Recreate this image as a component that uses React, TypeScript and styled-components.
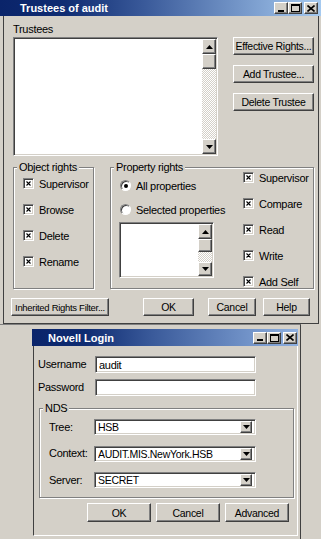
import React from "react";
import styled, { createGlobalStyle, css } from "styled-components";

const GlobalStyle = createGlobalStyle`
  html, body { margin: 0; padding: 0; }
  body {
    width: 321px;
    height: 539px;
    overflow: hidden;
    background: #d4d0c8;
    font-family: "Liberation Sans", Arial, sans-serif;
    font-size: 11px;
    letter-spacing: -0.3px;
    color: #000;
  }
`;

const raised = css`
  background: #d4d0c8;
  border: 1px solid;
  border-color: #fff #404040 #404040 #fff;
  box-shadow: inset -1px -1px 0 #808080;
  box-sizing: border-box;
`;

const sunken = css`
  background: #fff;
  border: 1px solid;
  border-color: #808080 #fff #fff #808080;
  box-shadow: inset 1px 1px 0 #404040, inset -1px -1px 0 #d4d0c8;
  box-sizing: border-box;
`;

const Desktop = styled.div`
  position: relative;
  width: 321px;
  height: 539px;
  overflow: hidden;
`;

const Window = styled.div<{ $w: number; $h: number }>`
  display: flex;
  flex-direction: column;
  width: ${(p) => p.$w}px;
  height: ${(p) => p.$h}px;
  background: #d4d0c8;
  box-sizing: border-box;
`;

const FloatingWindow = styled(Window)<{ $x: number; $y: number }>`
  position: absolute;
  left: ${(p) => p.$x}px;
  top: ${(p) => p.$y}px;
`;

const BackWindow = styled.div`
  position: absolute;
  left: 0;
  top: 324px;
  width: 301px;
  height: 215px;
  box-sizing: border-box;
  border-top: 1px solid #808080;
  border-right: 1px solid #404040;
`;

const TitleBar = styled.div<{ $h: number; $pl: number; $pr: number; $end: string }>`
  display: flex;
  align-items: center;
  flex: none;
  height: ${(p) => p.$h}px;
  padding: 0 ${(p) => p.$pr}px 0 ${(p) => p.$pl}px;
  background: linear-gradient(90deg, #0a246a 0%, #0f2c72 20%, #3a5a9a 45%, ${(p) => p.$end} 100%);
`;

const TitleText = styled.span`
  flex: 1;
  color: #fff;
  font-weight: bold;
  font-size: 11px;
  letter-spacing: 0;
  white-space: nowrap;
`;

const CaptionGroup = styled.div`
  display: flex;
  align-items: center;
`;

const CaptionButton = styled.div<{ $gap?: number }>`
  ${raised};
  width: 14px;
  height: 12px;
  margin-left: ${(p) => p.$gap ?? 0}px;
  display: flex;
  align-items: center;
  justify-content: center;
`;

const Caption = () => (
  <CaptionGroup>
    <CaptionButton>
      <svg width="8" height="7" viewBox="0 0 8 7">
        <rect x="1" y="5" width="6" height="2" fill="#000" />
      </svg>
    </CaptionButton>
    <CaptionButton>
      <svg width="9" height="8" viewBox="0 0 9 8">
        <rect x="0.5" y="0.5" width="8" height="7" fill="none" stroke="#000" />
        <rect x="0" y="0" width="9" height="2" fill="#000" />
      </svg>
    </CaptionButton>
    <CaptionButton $gap={2}>
      <svg width="8" height="7" viewBox="0 0 8 7">
        <path d="M0.5 0.5 L7.5 6.5 M7.5 0.5 L0.5 6.5" stroke="#000" strokeWidth="1.6" />
      </svg>
    </CaptionButton>
  </CaptionGroup>
);

/* ---------- top dialog ---------- */

const TrusteeBody = styled.div`
  flex: 1;
  margin: 0 2px 0 3px;
  border: 1px solid #404040;
  border-top: none;
  padding: 7px 0 0 9px;
  display: flex;
  flex-direction: column;
`;

const TopRow = styled.div`
  display: flex;
`;

const ListColumn = styled.div`
  display: flex;
  flex-direction: column;
`;

const Label = styled.div<{ $w?: number; $mb?: number }>`
  height: 13px;
  line-height: 13px;
  white-space: nowrap;
  margin-bottom: ${(p) => p.$mb ?? 0}px;
  ${(p) => p.$w !== undefined && `width: ${p.$w}px; flex: none;`}
`;

const ListBox = styled.div<{ $w: number; $h: number; $ml?: number }>`
  ${sunken};
  width: ${(p) => p.$w}px;
  height: ${(p) => p.$h}px;
  margin-left: ${(p) => p.$ml ?? 0}px;
  padding: 1px;
  display: flex;
  justify-content: flex-end;
`;

const ScrollBar = styled.div`
  width: 14px;
  display: flex;
  flex-direction: column;
`;

const ScrollButton = styled.div<{ $h: number }>`
  ${raised};
  height: ${(p) => p.$h}px;
  flex: none;
  display: flex;
  align-items: center;
  justify-content: center;
`;

const Track = styled.div`
  flex: 1;
  background: repeating-conic-gradient(#fff 0 25%, #d4d0c8 0 50%) 0 0 / 2px 2px;
`;

const Arrow = ({ down }: { down?: boolean }) => (
  <svg width="7" height="4" viewBox="0 0 7 4">
    <polygon points={down ? "0,0 7,0 3.5,4" : "0,4 7,4 3.5,0"} fill="#000" />
  </svg>
);

const SideButtons = styled.div`
  display: flex;
  flex-direction: column;
  gap: 10px;
  margin: 14px 0 0 15px;
`;

const PushButton = styled.div<{ $w: number; $h: number; $ml?: number; $fs?: number }>`
  ${raised};
  width: ${(p) => p.$w}px;
  height: ${(p) => p.$h}px;
  margin-left: ${(p) => p.$ml ?? 0}px;
  flex: none;
  display: flex;
  align-items: center;
  justify-content: center;
  font-size: ${(p) => p.$fs ?? 10.5}px;
  white-space: nowrap;
  overflow: hidden;
`;

const GroupRow = styled.div`
  display: flex;
  margin-top: 11px;
`;

const Group = styled.div<{ $w: number; $h: number; $ml?: number }>`
  position: relative;
  width: ${(p) => p.$w}px;
  height: ${(p) => p.$h}px;
  margin-left: ${(p) => p.$ml ?? 0}px;
  flex: none;
  box-sizing: border-box;
  border: 1px solid #808080;
  box-shadow: inset 1px 1px 0 #fff, 1px 1px 0 #fff;
`;

const Legend = styled.span`
  position: absolute;
  top: -7px;
  left: 3px;
  padding: 0 2px;
  line-height: 13px;
  background: #d4d0c8;
  white-space: nowrap;
`;

const CheckList = styled.div<{ $pt: number; $pl: number }>`
  display: flex;
  flex-direction: column;
  gap: 13px;
  padding: ${(p) => p.$pt}px 0 0 ${(p) => p.$pl}px;
`;

const PropertyInner = styled.div`
  display: flex;
  height: 100%;
`;

const PropertyLeft = styled.div`
  width: 132px;
  flex: none;
  padding: 11px 0 0 9px;
  box-sizing: border-box;
  display: flex;
  flex-direction: column;
`;

const Row = styled.div<{ $mb?: number }>`
  display: flex;
  align-items: center;
  height: 13px;
  gap: 5px;
  margin-bottom: ${(p) => p.$mb ?? 0}px;
  white-space: nowrap;
`;

const CheckBox = styled.div`
  ${sunken};
  width: 11px;
  height: 11px;
  flex: none;
  display: flex;
  align-items: center;
  justify-content: center;
`;

const RadioCircle = styled.div`
  width: 11px;
  height: 11px;
  flex: none;
  box-sizing: border-box;
  border-radius: 50%;
  background: #fff;
  border: 1px solid;
  border-color: #808080 #fff #fff #808080;
  box-shadow: inset 1px 1px 0 #404040;
  display: flex;
  align-items: center;
  justify-content: center;
`;

const RadioDot = styled.div`
  width: 4px;
  height: 4px;
  border-radius: 50%;
  background: #000;
`;

const Check = ({ label }: { label: string }) => (
  <Row>
    <CheckBox>
      <svg width="5" height="5" viewBox="0 0 5 5">
        <path d="M0.5 0.5 L4.5 4.5 M4.5 0.5 L0.5 4.5" stroke="#000" strokeWidth="1.1" />
      </svg>
    </CheckBox>
    <span>{label}</span>
  </Row>
);

const Radio = ({ label, on, mb }: { label: string; on?: boolean; mb: number }) => (
  <Row $mb={mb}>
    <RadioCircle>{on && <RadioDot />}</RadioCircle>
    <span>{label}</span>
  </Row>
);

const BottomRow = styled.div`
  display: flex;
  margin-top: 9px;
`;

/* ---------- Novell login ---------- */

const LoginBody = styled.div`
  flex: 1;
  margin-left: 1px;
  border-left: 1px solid #404040;
  border-right: 1px solid #fff;
  border-bottom: 1px solid #fff;
  padding: 10px 8px 0 4px;
  display: flex;
  flex-direction: column;
`;

const Fields = styled.div<{ $gap: number }>`
  display: flex;
  flex-direction: column;
  gap: ${(p) => p.$gap}px;
`;

const FieldRow = styled.div`
  display: flex;
  align-items: center;
`;

const TextInput = styled.div<{ $w: number; $h: number }>`
  ${sunken};
  width: ${(p) => p.$w}px;
  height: ${(p) => p.$h}px;
  padding: 0 3px;
  display: flex;
  align-items: center;
  white-space: nowrap;
`;

const ComboButton = styled.div`
  ${raised};
  margin-left: auto;
  width: 12px;
  height: 12px;
  flex: none;
  display: flex;
  align-items: center;
  justify-content: center;
`;

const ComboText = styled.span`
  flex: 1;
  overflow: hidden;
  font-size: 10.5px;
`;

const Combo = ({ value }: { value: string }) => (
  <TextInput $w={162} $h={16}>
    <ComboText>{value}</ComboText>
    <ComboButton>
      <Arrow down />
    </ComboButton>
  </TextInput>
);

const NdsGroup = styled(Group)`
  margin-top: 12px;
  margin-left: 1px;
  padding: 10px 0 0 9px;
`;

const LoginButtons = styled.div`
  display: flex;
  justify-content: flex-end;
  gap: 5px;
  margin-top: 5px;
`;

export default function App() {
  return (
    <>
      <GlobalStyle />
      <Desktop>
        <Window $w={321} $h={324}>
          <TitleBar $h={16} $pl={20} $pr={3} $end="#a6caf0">
            <TitleText>Trustees of audit</TitleText>
            <Caption />
          </TitleBar>
          <TrusteeBody>
            <TopRow>
              <ListColumn>
                <Label $mb={1}>Trustees</Label>
                <ListBox $w={205} $h={119}>
                  <ScrollBar>
                    <ScrollButton $h={15}>
                      <Arrow />
                    </ScrollButton>
                    <ScrollButton $h={15} />
                    <Track />
                    <ScrollButton $h={15}>
                      <Arrow down />
                    </ScrollButton>
                  </ScrollBar>
                </ListBox>
              </ListColumn>
              <SideButtons>
                <PushButton $w={81} $h={18}>Effective Rights...</PushButton>
                <PushButton $w={81} $h={18}>Add Trustee...</PushButton>
                <PushButton $w={81} $h={18}>Delete Trustee</PushButton>
              </SideButtons>
            </TopRow>

            <GroupRow>
              <Group $w={81} $h={122}>
                <Legend>Object rights</Legend>
                <CheckList $pt={9} $pl={9}>
                  <Check label="Supervisor" />
                  <Check label="Browse" />
                  <Check label="Delete" />
                  <Check label="Rename" />
                </CheckList>
              </Group>
              <Group $w={204} $h={122} $ml={16}>
                <Legend>Property rights</Legend>
                <PropertyInner>
                  <PropertyLeft>
                    <Radio label="All properties" on mb={11} />
                    <Radio label="Selected properties" mb={6} />
                    <ListBox $w={95} $h={56} $ml={-1}>
                      <ScrollBar>
                        <ScrollButton $h={15}>
                          <Arrow />
                        </ScrollButton>
                        <ScrollButton $h={13} />
                        <Track />
                        <ScrollButton $h={14}>
                          <Arrow down />
                        </ScrollButton>
                      </ScrollBar>
                    </ListBox>
                  </PropertyLeft>
                  <CheckList $pt={3} $pl={0}>
                    <Check label="Supervisor" />
                    <Check label="Compare" />
                    <Check label="Read" />
                    <Check label="Write" />
                    <Check label="Add Self" />
                  </CheckList>
                </PropertyInner>
              </Group>
            </GroupRow>

            <BottomRow>
              <PushButton $w={98} $h={18} $ml={-2} $fs={9.5}>Inherited Rights Filter...</PushButton>
              <PushButton $w={51} $h={18} $ml={34}>OK</PushButton>
              <PushButton $w={48} $h={18} $ml={14}>Cancel</PushButton>
              <PushButton $w={47} $h={18} $ml={7}>Help</PushButton>
            </BottomRow>
          </TrusteeBody>
        </Window>

        <BackWindow />

        <FloatingWindow $w={266} $h={207} $x={32} $y={329}>
          <TitleBar $h={17} $pl={16} $pr={1} $end="#8eb0e0">
            <TitleText>Novell Login</TitleText>
            <Caption />
          </TitleBar>
          <LoginBody>
            <Fields $gap={6}>
              <FieldRow>
                <Label $w={57}>Username</Label>
                <TextInput $w={161} $h={17}>audit</TextInput>
              </FieldRow>
              <FieldRow>
                <Label $w={57}>Password</Label>
                <TextInput $w={161} $h={17} />
              </FieldRow>
            </Fields>

            <NdsGroup $w={255} $h={90}>
              <Legend>NDS</Legend>
              <Fields $gap={10.5}>
                <FieldRow>
                  <Label $w={45}>Tree:</Label>
                  <Combo value="HSB" />
                </FieldRow>
                <FieldRow>
                  <Label $w={45}>Context:</Label>
                  <Combo value="AUDIT.MIS.NewYork.HSB" />
                </FieldRow>
                <FieldRow>
                  <Label $w={45}>Server:</Label>
                  <Combo value="SECRET" />
                </FieldRow>
              </Fields>
            </NdsGroup>

            <LoginButtons>
              <PushButton $w={64} $h={19}>OK</PushButton>
              <PushButton $w={64} $h={19}>Cancel</PushButton>
              <PushButton $w={64} $h={19}>Advanced</PushButton>
            </LoginButtons>
          </LoginBody>
        </FloatingWindow>
      </Desktop>
    </>
  );
}
